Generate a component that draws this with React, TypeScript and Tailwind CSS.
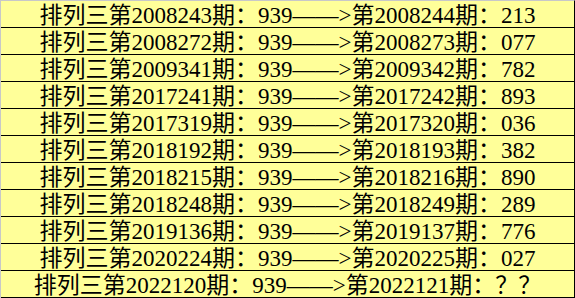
const rows: [string, string, string][] = [
  ['2008243', '2008244', '213'],
  ['2008272', '2008273', '077'],
  ['2009341', '2009342', '782'],
  ['2017241', '2017242', '893'],
  ['2017319', '2017320', '036'],
  ['2018192', '2018193', '382'],
  ['2018215', '2018216', '890'],
  ['2018248', '2018249', '289'],
  ['2019136', '2019137', '776'],
  ['2020224', '2020225', '027'],
  ['2022120', '2022121', '？？'],
];

export default function App() {
  return (
    <div className="w-[575px] h-[298px] bg-[#ffff99] border-t border-l border-t-[#c8c8c8] border-l-[#c8c8c8] border-r border-r-black">
      {rows.map(([cur, next, num]) => (
        <div
          key={cur}
          className="h-[27px] border-b border-black flex items-center justify-center text-[23px] leading-none text-black whitespace-nowrap"
          style={{ fontFamily: '"Liberation Serif", "Noto Sans CJK SC", serif' }}
        >
          <span className="pt-[2px]">
            排列三第{cur}期：939——&gt;第{next}期：{num}
          </span>
        </div>
      ))}
    </div>
  );
}
